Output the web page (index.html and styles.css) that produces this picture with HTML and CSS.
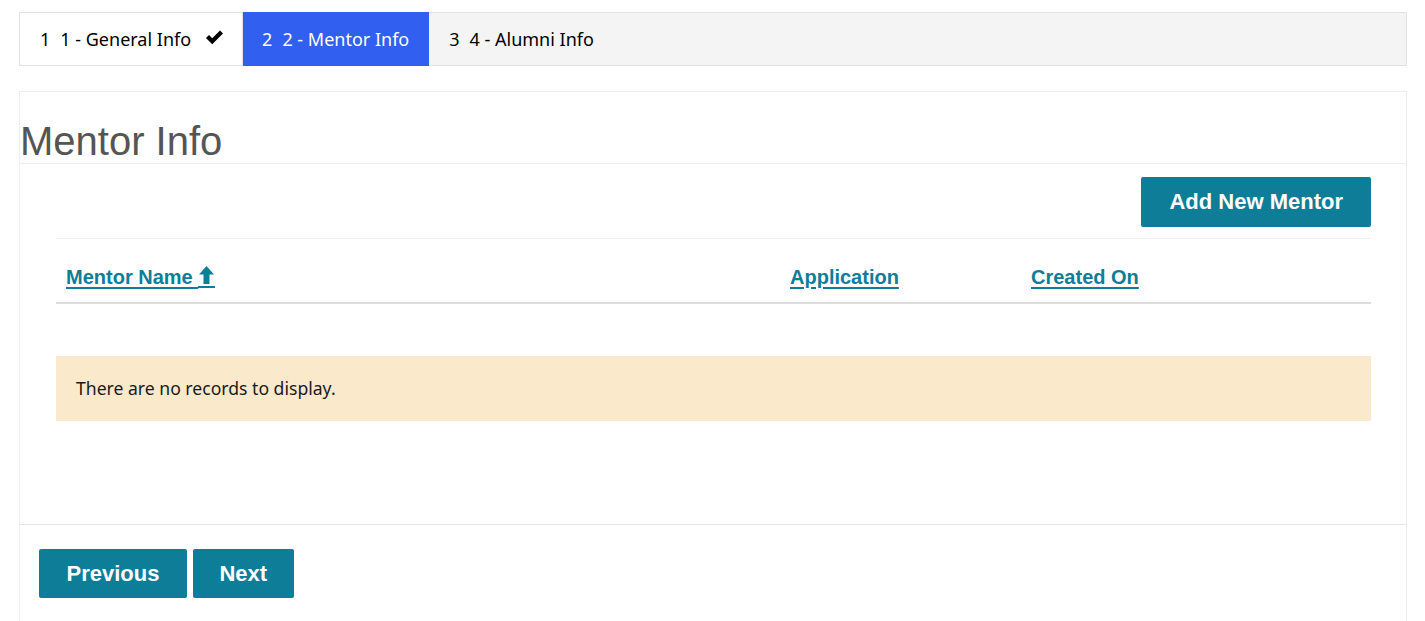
FILE: index.html
```html
<!DOCTYPE html>
<html>
<head>
<meta charset="utf-8">
<link rel="stylesheet" href="styles.css">
</head>
<body>
<div class="page">
  <ul class="steps">
    <li class="step done"><span class="num">1</span><span class="label">1 - General Info</span><svg class="check" viewBox="0 0 20 18" width="19" height="17"><path d="M1 9.5 L4.2 6.3 L7.6 9.7 L15.8 1.5 L19 4.7 L7.6 16.1 Z" fill="#000"/></svg></li>
    <li class="step active"><span class="num">2</span><span class="label">2 - Mentor Info</span></li>
    <li class="step"><span class="num">3</span><span class="label">4 - Alumni Info</span></li>
  </ul>

  <div class="panel">
    <h2 class="title">Mentor Info</h2>
    <div class="content">
      <div class="toolbar">
        <button class="btn">Add New Mentor</button>
      </div>
      <table class="grid">
        <thead>
          <tr>
            <th class="c1"><a href="#">Mentor Name <svg class="arrow" viewBox="0 0 17 22" width="17" height="22"><path d="M8.5 0 L16 8.5 L11.5 8.5 L11.5 18 L5.5 18 L5.5 8.5 L1 8.5 Z" fill="#0e7d97"/><rect x="0" y="20" width="17" height="2" fill="#0e7d97"/></svg></a></th>
            <th class="c2"><a href="#">Application</a></th>
            <th class="c3"><a href="#">Created On</a></th>
          </tr>
        </thead>
      </table>
      <div class="notice">There are no records to display.</div>
    </div>
    <div class="actions">
      <button class="btn">Previous</button>
      <button class="btn btn-next">Next</button>
    </div>
  </div>
</div>
</body>
</html>
```

FILE: styles.css
```css
html, body {
  margin: 0;
  padding: 0;
  background: #fff;
}
body {
  font-family: "Noto Sans", "Open Sans", sans-serif;
  color: #000;
  overflow: hidden;
}
.page {
  padding: 12px 18px 0 19px;
}
.steps {
  list-style: none;
  margin: 0;
  padding: 0;
  display: flex;
  background: #f4f4f4;
  border: 1px solid #e2e2e2;
  height: 52px;
}
.step {
  display: flex;
  align-items: center;
  padding: 0 20px;
  font-size: 18px;
  color: #000;
  white-space: nowrap;
}
.step .num {
  margin-right: 10px;
}
.step.done {
  background: #fff;
  border-right: 1px solid #e2e2e2;
  padding-right: 18px;
}
.step.done .check {
  margin-left: 14px;
  margin-top: -4px;
}
.step.active {
  background: #315ff0;
  color: #fff;
  margin-top: -1px;
  margin-bottom: -1px;
  padding: 0 20px 0 19px;
}
.panel {
  margin-top: 25px;
  border: 1px solid #eeeeee;
  border-bottom: none;
  height: 540px;
}
.title {
  margin: 27px 0 0 0;
  font-family: "Liberation Sans", Arial, sans-serif;
  font-weight: normal;
  font-size: 40px;
  line-height: 44px;
  color: #555;
  border-bottom: 1px solid #eeeeee;
}
.content {
  padding: 0 35px 0 36px;
  height: 360px;
}
.toolbar {
  display: flex;
  justify-content: flex-end;
  padding-top: 13px;
  padding-bottom: 11px;
}
.btn {
  font-family: "Liberation Sans", Arial, sans-serif;
  font-weight: bold;
  font-size: 22px;
  color: #fff;
  background: #0e7d97;
  border: none;
  border-radius: 2px;
  height: 49px;
  padding: 0 27.5px;
  cursor: pointer;
}
.toolbar .btn {
  height: 50px;
  padding: 0 28px;
}
.btn-next {
  padding: 0 26.5px;
}
.grid {
  width: 100%;
  border-collapse: collapse;
  table-layout: fixed;
}
.grid th {
  text-align: left;
  font-family: "Liberation Sans", Arial, sans-serif;
  font-weight: bold;
  font-size: 20px;
  line-height: 23px;
  padding: 27px 10px 13px;
  border-top: 1px solid #eeeeee;
  border-bottom: 2px solid #dddddd;
}
.grid th a {
  color: #0e7d97;
  text-decoration: underline;
  text-underline-offset: 3px;
}
.grid .c1 { width: 704px; }
.grid .c2 { width: 221px; }
.arrow {
  vertical-align: -4px;
}
.notice {
  margin-top: 52px;
  background: #fae9cb;
  padding: 0 20px;
  height: 65px;
  line-height: 65px;
  font-size: 17.6px;
  color: #1a1a1a;
}
.actions {
  border-top: 1px solid #e6e6e6;
  padding: 24px 19px 0;
  display: flex;
  gap: 6px;
}
```
